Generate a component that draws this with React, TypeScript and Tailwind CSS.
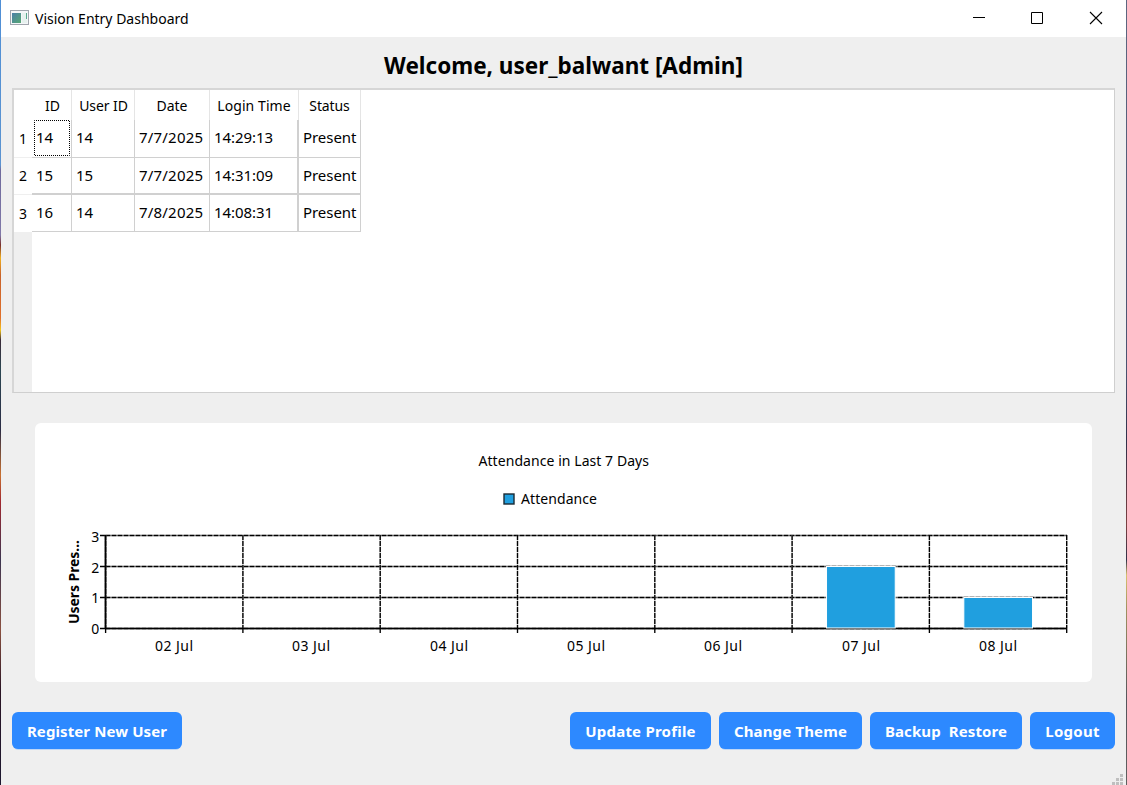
import { ReactNode } from "react";

const rows = [
  { id: "14", user: "14", date: "7/7/2025", time: "14:29:13", status: "Present" },
  { id: "15", user: "15", date: "7/7/2025", time: "14:31:09", status: "Present" },
  { id: "16", user: "14", date: "7/8/2025", time: "14:08:31", status: "Present" },
];

const days = [
  { label: "02 Jul", users: 0 },
  { label: "03 Jul", users: 0 },
  { label: "04 Jul", users: 0 },
  { label: "05 Jul", users: 0 },
  { label: "06 Jul", users: 0 },
  { label: "07 Jul", users: 2 },
  { label: "08 Jul", users: 1 },
];

const columns = "grid grid-cols-[18px_40px_63px_75px_89px_62px] w-[347px]";

function AppIcon() {
  return (
    <svg className="mt-[10px] h-4 w-[19px]" viewBox="0 0 19 16" shapeRendering="crispEdges">
      <defs>
        <linearGradient id="pane" x1="0" y1="0" x2="1" y2="1">
          <stop offset="0" stopColor="#4a7fa8" />
          <stop offset="1" stopColor="#57a873" />
        </linearGradient>
      </defs>
      <rect x="0.5" y="0.5" width="18" height="14" fill="#f4f6f8" stroke="#a0a5ad" />
      <rect x="2" y="3" width="9" height="10" fill="url(#pane)" />
      <rect x="12" y="3" width="5" height="10" fill="#e6f1ee" />
      <rect x="16" y="3" width="1" height="6" fill="#57a88d" />
    </svg>
  );
}

function TitleBar() {
  return (
    <div className="flex h-[37px] bg-white pl-[9px]">
      <AppIcon />
      <div className="ml-[6px] text-[14px] leading-[37px]">Vision Entry Dashboard</div>
      <svg className="ml-auto h-[37px] w-[174px]" viewBox="0 0 174 37" fill="none" stroke="#000">
        <path d="M21 17.5h12" />
        <path d="M79.5 12.5h11v11h-11z" />
        <path d="M138 12l12 12M150 12l-12 12" strokeWidth="1.1" />
      </svg>
    </div>
  );
}

function Cell({ children, focused = false, wide = false, date = false }: { children: ReactNode; focused?: boolean; wide?: boolean; date?: boolean }) {
  return (
    <div
      className={`relative whitespace-nowrap border-[#d0d0d0] pl-[4px] text-[15px] ${wide ? "border-r-2" : "border-r"} ${date ? "tracking-[0.2px]" : "tracking-[-0.05px]"}`}
    >
      {children}
      {focused && (
        <svg className="absolute left-[2px] top-0 h-9 w-9" viewBox="0 0 36 36">
          <rect x="0.5" y="0.5" width="35" height="35" fill="none" stroke="#000" strokeDasharray="1 1" strokeDashoffset="0.5" />
        </svg>
      )}
    </div>
  );
}

function AttendanceTable() {
  return (
    <div className="mx-[11px] flex h-[305px] flex-col border border-l-2 border-t-2 border-[#cfcfcf] border-l-[#d6d6d6] border-t-[#d6d6d6] bg-white">
      <div className={`${columns} h-[30px] text-center text-[14px] leading-[31px]`}>
        <div />
        <div className="border-r border-[#e5e5e5] pl-[2px]">ID</div>
        <div className="border-r border-[#e5e5e5] pl-px tracking-[-0.1px]">User ID</div>
        <div className="border-r border-[#e5e5e5]">Date</div>
        <div className="border-r border-[#e5e5e5] tracking-[0.08px]">Login Time</div>
        <div className="border-r border-[#e5e5e5] tracking-[-0.1px]">Status</div>
      </div>
      {rows.map((row, i) => {
        const height = ["h-[37px] leading-[34px]", "h-[38px] leading-[36px]", "h-[37px] leading-[34px]"][i];
        return (
          <div key={row.id} className={`${columns} ${height}`}>
            <div className={`pl-[5px] pt-px text-[14px] leading-[36px] ${i < 2 ? "border-b border-[#efefef]" : ""}`}>{i + 1}</div>
            <div
              className={`col-span-5 grid grid-cols-[40px_63px_75px_89px_62px] border-[#d0d0d0] ${i === 1 ? "border-b-2" : "border-b"}`}
            >
              <Cell focused={i === 0}>{row.id}</Cell>
              <Cell>{row.user}</Cell>
              <Cell date>{row.date}</Cell>
              <Cell wide>{row.time}</Cell>
              <Cell>{row.status}</Cell>
            </div>
          </div>
        );
      })}
      <div className="w-[18px] flex-1 bg-[#efefef]" />
    </div>
  );
}

function Chart() {
  const left = 70.5;
  const step = 137.3;
  const yOf = (v: number) => [205.5, 174.5, 143.5, 112.5][v];
  return (
    <svg className="ml-[34px] mt-[30px] block h-[259px] w-[1057px] rounded-[6px] bg-white font-['Noto_Sans',sans-serif]" viewBox="0 0 1057 259">
      <text x="443.5" y="43" fontSize="14" textLength="170.5">Attendance in Last 7 Days</text>
      <rect x="469" y="71" width="10" height="10" fill="#209fdf" stroke="#1b2a33" strokeWidth="1.4" />
      <text x="486" y="81" fontSize="14" textLength="76">Attendance</text>

      <g stroke="#000" strokeWidth="1.35">
        {[0, 1, 2, 3].map((v) => (
          <g key={v}>
            <path d={`M${left} ${yOf(v)}H1032`} stroke="#c4c4c4" />
            <path d={`M${left} ${yOf(v)}H1032`} strokeDasharray="5 1" />
            <path d={`M65 ${yOf(v)}H${left}`} />
          </g>
        ))}
        {[0, 1, 2, 3, 4, 5, 6, 7].map((i) => {
          const x = left + 0.1 + i * step;
          return (
            <g key={i}>
              <path d={`M${x} 112V205`} stroke="#c4c4c4" />
              <path d={`M${x} 112V205`} strokeDasharray="5 1" />
              <path d={`M${x} 205V210`} />
            </g>
          );
        })}
        <path d="M70.5 112.5V205.5" strokeWidth="1.8" />
        <path d="M70 205.5H1032" />
      </g>

      {days.map((day, i) =>
        day.users > 0 ? (
          <rect
            key={day.label}
            x={left + (i + 0.25) * step + 0.2}
            y={yOf(day.users)}
            width="68.7"
            height={205 - yOf(day.users)}
            fill="#209fdf"
            stroke="#fff"
          />
        ) : null,
      )}

      {days.map((day, i) => (
        <text key={day.label} x={Math.floor(left + (i + 0.5) * step - 18.5)} y="228" fontSize="14" textLength="38">
          {day.label}
        </text>
      ))}
      {[0, 1, 2, 3].map((v) => (
        <text key={v} x="64.3" y={yOf(v) + (v > 1 ? 6 : 5.5)} fontSize="14" textAnchor="end">
          {v}
        </text>
      ))}
      <text transform="translate(44.3 201) rotate(-90)" fontSize="14" fontWeight="700" textLength="84">
        Users Pres...
      </text>
    </svg>
  );
}

function Button({ children, className }: { children: ReactNode; className: string }) {
  return (
    <button className={`h-[37px] whitespace-pre rounded-[6px] bg-[#2d89ff] text-center text-[15px] font-bold leading-[39px] text-white shadow-[0_1px_0_-0.5px_#8fbfff] ${className}`}>
      {children}
    </button>
  );
}

function SizeGrip() {
  return (
    <svg className="absolute bottom-0 right-[3px] h-[11px] w-[11px]" viewBox="0 0 11 11" fill="#bfbfbf">
      <path d="M8 0h3v3H8zM4 4h3v3H4zM8 4h3v3H8zM0 8h3v3H0zM4 8h3v3H4zM8 8h3v3H8z" />
    </svg>
  );
}

export default function App() {
  return (
    <div className="flex h-[785px] w-[1127px] overflow-hidden font-['Noto_Sans',sans-serif] text-black">
      <div className="w-px bg-[linear-gradient(#4f8fd6_0,#5b93d0_165px,#6f6a9c_170px,#8078a8_235px,#7a2f2a_245px,#f0b020_258px,#c8622a_275px,#e0702a_318px,#f5c518_330px,#3a2a38_340px,#2c4652_370px,#2b2c45_430px,#c87030_475px,#a02830_502px,#3c3450_560px,#8a5040_630px,#2a1424_690px,#1c1830_785px)]" />
      <div className="relative flex w-[1125px] flex-col bg-[#efefef]">
        <TitleBar />
        <h1 className="h-[51px] pt-[9px] text-center text-[22.5px] font-bold leading-10">Welcome, user_balwant [Admin]</h1>
        <AttendanceTable />
        <Chart />
        <div className="mx-[11px] mt-[30px] flex gap-2">
          <Button className="mr-auto w-[170px] tracking-[0.1px]">Register New User</Button>
          <Button className="w-[141px] tracking-[0.22px]">Update Profile</Button>
          <Button className="w-[143px] tracking-[0.15px]">Change Theme</Button>
          <Button className="w-[152px] tracking-[0.1px]">{"Backup  Restore"}</Button>
          <Button className="w-[85px] tracking-[0.25px]">Logout</Button>
        </div>
        <SizeGrip />
      </div>
      <div className="w-px bg-[linear-gradient(#5d6680_0,#4a5270_370px,#30304a_440px,#7a4040_525px,#303048_560px,#d8c070_575px,#a09060_610px,#55555c_700px,#60605f_785px)]" />
    </div>
  );
}
